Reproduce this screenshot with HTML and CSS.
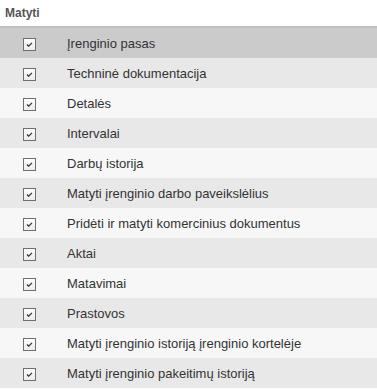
FILE: index.html
```html
<!DOCTYPE html>
<html lang="lt">
<head>
    <meta charset="UTF-8">
    <meta name="viewport" content="width=device-width, initial-scale=1.0">
    <title>Teisės</title>
    <link rel="stylesheet" href="styles.css">
</head>
<body>
    <table class="rights">
        <thead>
            <tr>
                <th colspan="2">Matyti</th>
            </tr>
        </thead>
        <tbody>
            <tr class="active">
                <td class="check"><span class="box"><svg viewBox="0 0 8 6" width="7" height="5"><path d="M1 3 L3 5 L7 1" fill="none" stroke="#333" stroke-width="1.5"/></svg></span></td>
                <td>Įrenginio pasas</td>
            </tr>
            <tr>
                <td class="check"><span class="box"><svg viewBox="0 0 8 6" width="7" height="5"><path d="M1 3 L3 5 L7 1" fill="none" stroke="#333" stroke-width="1.5"/></svg></span></td>
                <td>Techninė dokumentacija</td>
            </tr>
            <tr>
                <td class="check"><span class="box"><svg viewBox="0 0 8 6" width="7" height="5"><path d="M1 3 L3 5 L7 1" fill="none" stroke="#333" stroke-width="1.5"/></svg></span></td>
                <td>Detalės</td>
            </tr>
            <tr>
                <td class="check"><span class="box"><svg viewBox="0 0 8 6" width="7" height="5"><path d="M1 3 L3 5 L7 1" fill="none" stroke="#333" stroke-width="1.5"/></svg></span></td>
                <td>Intervalai</td>
            </tr>
            <tr>
                <td class="check"><span class="box"><svg viewBox="0 0 8 6" width="7" height="5"><path d="M1 3 L3 5 L7 1" fill="none" stroke="#333" stroke-width="1.5"/></svg></span></td>
                <td>Darbų istorija</td>
            </tr>
            <tr>
                <td class="check"><span class="box"><svg viewBox="0 0 8 6" width="7" height="5"><path d="M1 3 L3 5 L7 1" fill="none" stroke="#333" stroke-width="1.5"/></svg></span></td>
                <td>Matyti įrenginio darbo paveikslėlius</td>
            </tr>
            <tr>
                <td class="check"><span class="box"><svg viewBox="0 0 8 6" width="7" height="5"><path d="M1 3 L3 5 L7 1" fill="none" stroke="#333" stroke-width="1.5"/></svg></span></td>
                <td>Pridėti ir matyti komercinius dokumentus</td>
            </tr>
            <tr>
                <td class="check"><span class="box"><svg viewBox="0 0 8 6" width="7" height="5"><path d="M1 3 L3 5 L7 1" fill="none" stroke="#333" stroke-width="1.5"/></svg></span></td>
                <td>Aktai</td>
            </tr>
            <tr>
                <td class="check"><span class="box"><svg viewBox="0 0 8 6" width="7" height="5"><path d="M1 3 L3 5 L7 1" fill="none" stroke="#333" stroke-width="1.5"/></svg></span></td>
                <td>Matavimai</td>
            </tr>
            <tr>
                <td class="check"><span class="box"><svg viewBox="0 0 8 6" width="7" height="5"><path d="M1 3 L3 5 L7 1" fill="none" stroke="#333" stroke-width="1.5"/></svg></span></td>
                <td>Prastovos</td>
            </tr>
            <tr>
                <td class="check"><span class="box"><svg viewBox="0 0 8 6" width="7" height="5"><path d="M1 3 L3 5 L7 1" fill="none" stroke="#333" stroke-width="1.5"/></svg></span></td>
                <td>Matyti įrenginio istoriją įrenginio kortelėje</td>
            </tr>
            <tr>
                <td class="check"><span class="box"><svg viewBox="0 0 8 6" width="7" height="5"><path d="M1 3 L3 5 L7 1" fill="none" stroke="#333" stroke-width="1.5"/></svg></span></td>
                <td>Matyti įrenginio pakeitimų istoriją</td>
            </tr>
        </tbody>
    </table>
</body>
</html>
```

FILE: styles.css
```css
body {
    margin: 0;
    font-family: 'Liberation Sans', Arial, sans-serif;
    font-size: 13px;
    color: #333;
    background-color: #fff;
}
.rights {
    width: 100%;
    border-collapse: collapse;
}
.rights th {
    height: 26px;
    padding: 0 5px;
    text-align: left;
    font-size: 12px;
    font-weight: bold;
    color: #555;
    border-bottom: 2px solid #c8bcbc;
}
.rights td {
    height: 30px;
    padding: 0 0 0 8px;
    vertical-align: middle;
}
.rights td.check {
    width: 59px;
    padding: 0;
    text-align: center;
}
.rights tbody tr:nth-child(odd) {
    background-color: #f7f7f7;
}
.rights tbody tr:nth-child(even) {
    background-color: #e8e8e8;
}
.rights tbody tr.active {
    background-color: #cbcbcb;
}
.box {
    display: inline-flex;
    align-items: center;
    justify-content: center;
    width: 11px;
    height: 11px;
    border: 1px solid #6f6f6f;
    background: linear-gradient(#fdfdfd, #ececec);
    vertical-align: middle;
}
```
